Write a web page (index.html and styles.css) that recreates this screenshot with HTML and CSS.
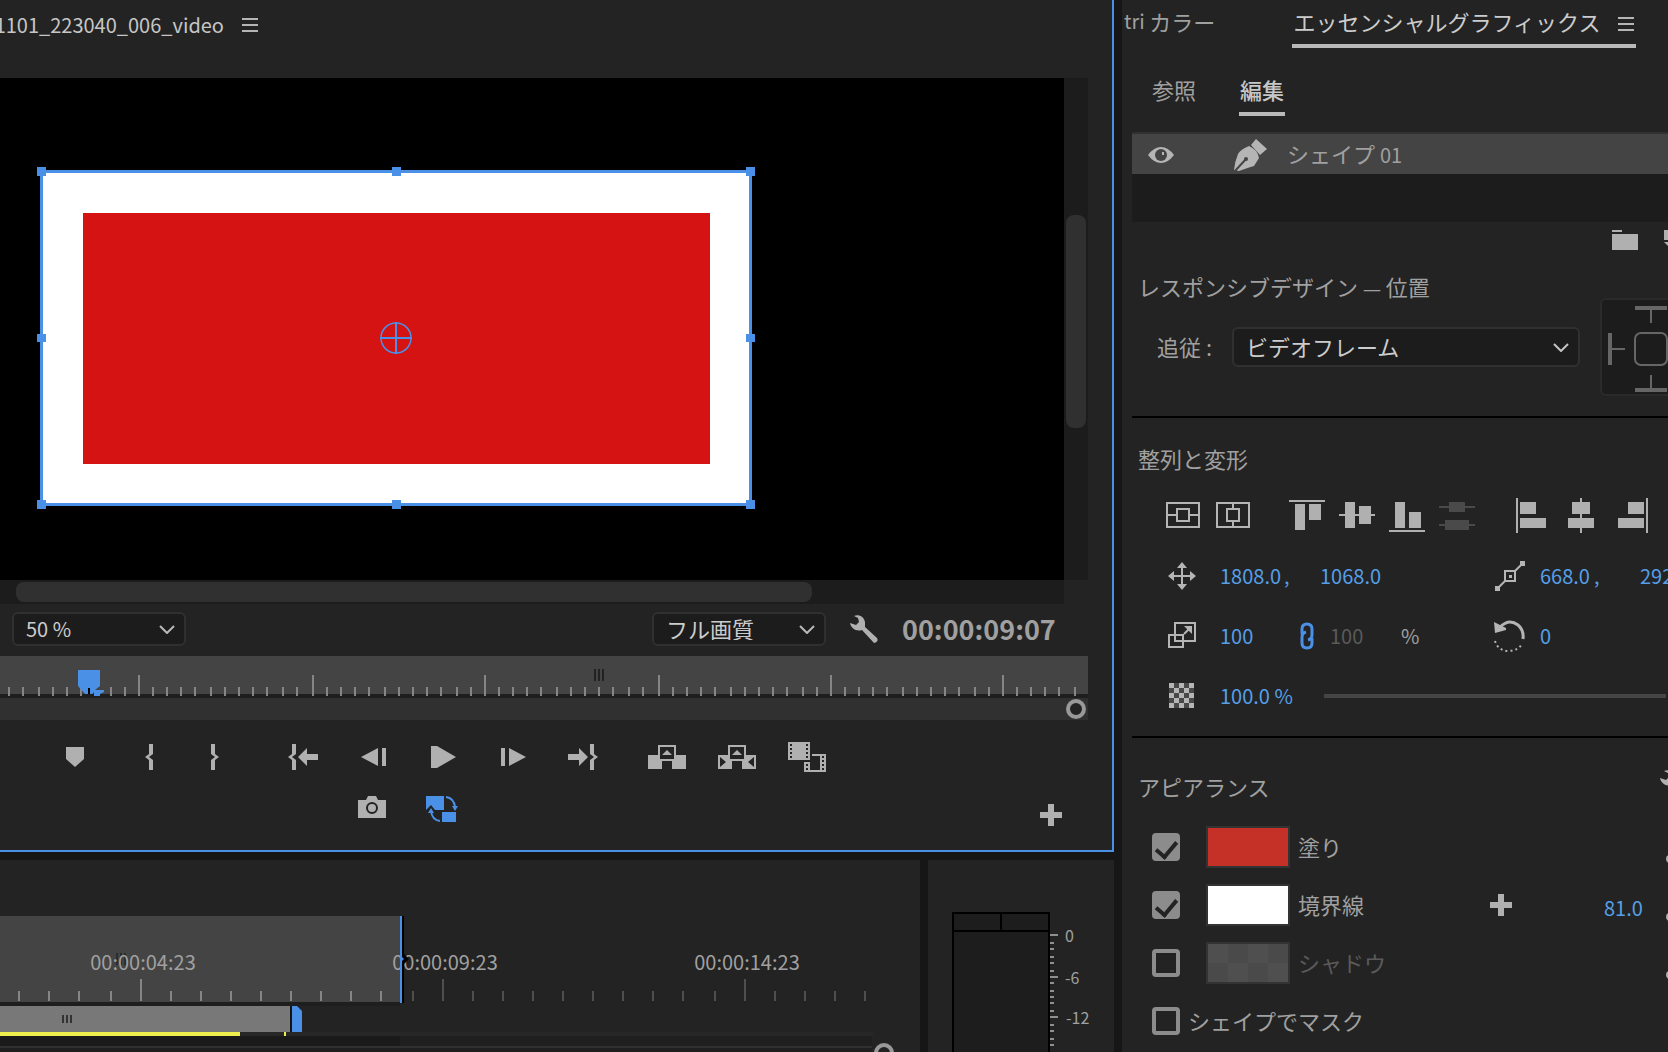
FILE: index.html
```html
<!DOCTYPE html>
<html lang="ja">
<head>
<meta charset="utf-8">
<title>エッセンシャルグラフィックス</title>
<link rel="stylesheet" href="styles.css">
</head>
<body>
<div class="app">
  <div class="left">
    <section class="monitor">
      <header class="monitor-head">
        <h1 class="clip-name"><span>1101_223040_006_video</span></h1>
        <button class="icon-btn" aria-label="パネルメニュー"><svg width="16" height="14"><path d="M0 1h16M0 7h16M0 13h16" stroke="#b5b5b5" stroke-width="2"/></svg></button>
      </header>

      <div class="stage">
        <div class="canvas">
          <svg width="1064" height="502" viewBox="0 78 1064 502">
            <rect x="42" y="172" width="708" height="332" fill="#fff"/>
            <rect x="83" y="213" width="627" height="251" fill="#d51313"/>
            <rect x="41.500" y="171.500" width="709" height="333" fill="none" stroke="#4a90e6" stroke-width="3"/>
            <path fill="#4a90e6" d="M37 167h9v9h-9zM392 167h9v9h-9zM746 167h9v9h-9zM37 334h9v8h-9zM746 334h9v8h-9zM37 500h9v9h-9zM392 500h9v9h-9zM746 500h9v9h-9z"/>
            <g fill="none" stroke="#4a90e6"><circle cx="396" cy="338" r="15" stroke-width="1.500"/><path d="M396 322v32M380 338h32" stroke-width="2"/></g>
          </svg>
        </div>
        <div class="track-v"><div class="thumb-v"></div></div>
        <div class="track-h"><div class="thumb-h"></div></div>
      </div>

      <div class="monitor-bar">
        <div class="select zoom">
          <select aria-label="ズームレベル"><option>50 %</option></select>
          <svg width="16" height="9"><path d="M1 1l7 7 7-7" fill="none" stroke="#b9b9b9" stroke-width="2"/></svg>
        </div>
        <div class="select quality">
          <select aria-label="再生時の解像度"><option>フル画質</option></select>
          <svg width="16" height="9"><path d="M1 1l7 7 7-7" fill="none" stroke="#b9b9b9" stroke-width="2"/></svg>
        </div>
        <button class="icon-btn wrench" aria-label="設定"><svg width="28" height="28" viewBox="0 0 28 28"><path fill="#b0b0b0" d="M4 1C9-1 14 2 15 7v5L27 23q2 4-3 5L12 15C6 17 1 13 0 8L6 10l3-3-1-4z"/></svg></button>
        <output class="timecode">00:00:09:07</output>
      </div>

      <div class="mini-ruler">
        <svg width="1088" height="64" viewBox="0 656 1088 64">
          <path fill="#444" d="M0 656h1088v38H0z"/>
          <path fill="#1e1e1e" d="M0 694h1088v4H0z"/>
          <path fill="#303030" d="M0 698h1088v22H0z"/>
          <path stroke="#858585" stroke-width="2" d="M9 687v9M23 687v9M39 687v9M53 687v9M67 687v9M81 687v9M111 687v9M125 687v9M139 675v21M153 687v9M167 687v9M181 687v9M195 687v9M211 687v9M225 687v9M239 687v9M253 687v9M267 687v9M283 687v9M297 687v9M313 675v21M327 687v9M341 687v9M355 687v9M369 687v9M385 687v9M399 687v9M413 687v9M427 687v9M441 687v9M457 687v9M471 687v9M485 675v21M499 687v9M513 687v9M527 687v9M541 687v9M557 687v9M571 687v9M585 687v9M599 687v9M613 687v9M629 687v9M643 687v9M659 675v21M673 687v9M687 687v9M701 687v9M715 687v9M731 687v9M745 687v9M759 687v9M773 687v9M787 687v9M803 687v9M817 687v9M831 675v21M845 687v9M859 687v9M873 687v9M887 687v9M903 687v9M917 687v9M931 687v9M945 687v9M959 687v9M975 687v9M989 687v9M1003 675v21M1017 687v9M1031 687v9M1045 687v9M1059 687v9M1075 687v9"/>
          <path stroke="#222" stroke-width="2" d="M595 669v12M599 669v12M603 669v12"/>
          <path fill="#4a90e6" d="M78 670h22v16l-5 4h9v2l-4 2v2h-6v-4l-2 2h-7l-7-8z"/>
          <path stroke="#000" stroke-width="2" d="M89 688v6"/>
          <circle cx="1076" cy="709" r="8" fill="#232323" stroke="#999" stroke-width="4"/>
        </svg>
      </div>

      <div class="transport">
        <div class="group small">
          <button aria-label="マーカーを追加"><svg width="18" height="20"><path fill="#b0b0b0" d="M0 0h18v12l-9 8-9-8z"/></svg></button>
        </div>
        <div class="group small">
          <button aria-label="インをマーク"><svg width="8" height="26"><path fill="#b0b0b0" d="M4 0h4v10l-4 3 4 3v10H4V16L0 13l4-3z"/></svg></button>
          <button aria-label="アウトをマーク"><svg width="8" height="26"><path fill="#b0b0b0" d="M4 0H0v10l4 3-4 3v10h4V16l4-3-4-3z"/></svg></button>
        </div>
        <div class="group">
          <button aria-label="インへ移動"><svg width="30" height="26"><path fill="#b0b0b0" d="M4 0h4v10l-4 3 4 3v10H4V16L0 13l4-3zM10 13l9-9v6h11v6H19v6z"/></svg></button>
          <button aria-label="1フレーム前へ戻る"><svg width="25" height="18"><path fill="#b0b0b0" d="M17 0v18L0 9zM21 0h4v18h-4z"/></svg></button>
          <button aria-label="再生"><svg width="25" height="22"><path fill="#b0b0b0" d="M0 0h6l19 11L6 22H0z"/></svg></button>
          <button aria-label="1フレーム先へ進む"><svg width="25" height="18"><path fill="#b0b0b0" d="M8 0v18l17-9zM0 0h4v18H0z"/></svg></button>
          <button aria-label="アウトへ移動"><svg width="30" height="26"><path fill="#b0b0b0" d="M26 0h-4v10l4 3-4 3v10h4V16l4-3-4-3zM20 13l-9-9v6H0v6h11v6z"/></svg></button>
        </div>
        <div class="group">
          <button aria-label="リフト"><svg width="38" height="26" viewBox="0 -1 38 26"><path fill="#b0b0b0" d="M0 10h10v6h4v8H0zM38 10H28v6h-4v8h14z"/><path fill="none" stroke="#b0b0b0" stroke-width="2" d="M11 1h16v14H11z"/><path fill="#b0b0b0" d="M19 5l5 5H14z"/></svg></button>
          <button aria-label="抽出"><svg width="38" height="26" viewBox="0 -1 38 26"><path fill="#b0b0b0" d="M0 10h10v6h4v8H0zM38 10H28v6h-4v8h14z"/><path fill="none" stroke="#b0b0b0" stroke-width="2" d="M11 1h16v14H11z"/><path fill="#b0b0b0" d="M19 5l5 5H14z"/><path fill="#232323" d="M2 12l6 5-6 5zM36 12l-6 5 6 5z"/></svg></button>
          <button aria-label="比較表示"><svg width="38" height="30"><path fill="#b0b0b0" d="M0 0h22v18H0zM24 12h14v18H16V20h6v8h10V14h-8z"/><path stroke="#232323" stroke-width="2" stroke-dasharray="2 2" d="M3 2v15M19 2v15M19 22v7M35 14v15"/></svg></button>
        </div>
      </div>
      <div class="transport-2">
        <button aria-label="フレームを書き出し"><svg width="28" height="22"><path fill="#b0b0b0" d="M0 4h8l2-4h8l2 4h8v18H0z"/><circle cx="14" cy="12" r="5" fill="#b0b0b0" stroke="#232323" stroke-width="2"/></svg></button>
        <button aria-label="プロキシの切り替え"><svg width="32" height="26"><path fill="#4a90e6" d="M0 0h18v14H9L5 9 0 14zM16 16h14v10H16zM26 10h6l-3 5zM2 17l3-5 3 5z"/><path fill="none" stroke="#4a90e6" stroke-width="2" d="M20 1q8 1 9 10M5 15q1 9 9 10"/></svg></button>
        <button class="add" aria-label="ボタンエディター"><svg width="22" height="22"><path fill="#b0b0b0" d="M8 0h6v8h8v6h-8v8H8v-8H0V8h8z"/></svg></button>
      </div>
    </section>

    <div class="bottom">
      <section class="timeline" aria-label="タイムライン">
        <svg width="920" height="192" viewBox="0 860 920 192">
          <path fill="#444" d="M0 916h400v86H0z"/>
          <path fill="#1e1e1e" d="M0 1002h400v4H0z"/>
          <path stroke="#2c2c2c" stroke-width="2" d="M117 953v12M121 953v12M125 953v12"/>
          <path stroke="#858585" stroke-width="2" d="M19 991v10M49 991v10M79 991v10M111 991v10M141 979v22M171 991v10M201 991v10M231 991v10M261 991v10M291 991v10M321 991v10M351 991v10M381 991v10"/>
          <path stroke="#4e4e4e" stroke-width="2" d="M413 991v10M443 979v22M473 991v10M503 991v10M533 991v10M563 991v10M593 991v10M623 991v10M653 991v10M683 991v10M715 991v10M745 979v22M775 991v10M805 991v10M835 991v10M865 991v10"/>
          <g class="ruler-text">
            <text x="143" y="970">00:00:04:23</text>
            <text x="445" y="970">00:00:09:23</text>
            <text x="747" y="970">00:00:14:23</text>
          </g>
          <path fill="#000" d="M402 916h2v38l5 5-5 5v39h-2z"/>
          <path fill="#4a90e6" d="M400 916h2v41l2 2-2 2v42h-2z"/>
          <path fill="#272727" d="M0 1032h873v4H0z"/>
          <path fill="#1f1f1f" d="M0 1036h872v16H0z"/>
          <path fill="#1a1a1a" d="M0 1036h400v10H0z"/>
          <path fill="#303030" d="M0 1046h872v2H0z"/>
          <path fill="#787878" d="M0 1006h290v26H0z"/>
          <path fill="#141414" d="M290 1006h2v26h-2z"/>
          <path stroke="#333" stroke-width="2" d="M63 1015v8M67 1015v8M71 1015v8"/>
          <path fill="#4a90e6" d="M292 1006h5l5 5v21h-10z"/>
          <path fill="#f0ee4d" d="M0 1032h240v4H0zM284 1032h2v4h-2z"/>
          <circle cx="884" cy="1053" r="8" fill="#232323" stroke="#999" stroke-width="4"/>
        </svg>
      </section>
      <section class="meters" aria-label="オーディオメーター">
        <svg width="186" height="192" viewBox="928 860 186 192">
          <path fill="#1d1d1d" stroke="#000" stroke-width="2" d="M953 913h96v160h-96zM953 931h96M1001 913v18"/>
          <path stroke="#909090" stroke-width="2" d="M1050 935h8M1050 943h4M1050 949h4M1050 957h4M1050 963h4M1050 971h4M1050 977h8M1050 983h4M1050 991h4M1050 997h4M1050 1003h4M1050 1011h4M1050 1017h8M1050 1025h4M1050 1031h4M1050 1039h4M1050 1045h4"/>
          <g class="meter-text">
            <text x="1065" y="942">0</text>
            <text x="1065" y="984">-6</text>
            <text x="1066" y="1024">-12</text>
          </g>
        </svg>
      </section>
    </div>
  </div>

  <aside class="graphics">
    <nav class="tabs">
      <button class="tab"><span class="latin">tri </span>カラー</button>
      <button class="tab active">エッセンシャルグラフィックス<svg width="16" height="14"><path d="M0 1h16M0 7h16M0 13h16" stroke="#b5b5b5" stroke-width="2"/></svg></button>
    </nav>
    <nav class="subtabs">
      <button class="subtab">参照</button>
      <button class="subtab active">編集</button>
    </nav>

    <div class="layers">
      <div class="layer">
        <button class="icon-btn" aria-label="表示の切り替え"><svg width="26" height="16"><path fill="#b5b5b5" d="M0 8Q6 0 13 0t13 8q-6 8-13 8T0 8z"/><circle cx="13" cy="8" r="6" fill="#444"/><path fill="#b5b5b5" d="M14 5h2v3h-2z"/></svg></button>
        <svg class="pen" width="33" height="32"><path fill="#b5b5b5" d="M22 0l11 10-7 6-9-10zM15 7q9 4 10 12l-5 8q-7 2-15 5l-5-1q1-9 4-16 3-5 11-8z"/><path fill="none" stroke="#444" stroke-width="2" d="M1 32l11-12"/><circle cx="12" cy="20" r="2" fill="#444"/></svg>
        <span>シェイプ <span class="latin">01</span></span>
      </div>
    </div>
    <div class="layer-tools">
      <button class="icon-btn" aria-label="グループを作成"><svg width="26" height="20"><path fill="#b0b0b0" d="M0 0h10v2H0zM0 4h26v16H0z"/></svg></button>
      <button class="icon-btn" aria-label="新規レイヤー"><svg width="26" height="20"><path fill="#b0b0b0" d="M0 0h20v10H0zM0 12h8v8z"/></svg></button>
    </div>

    <h2 class="heading">レスポンシブデザイン <span class="dash">—</span> 位置</h2>
    <div class="follow">
      <label for="follow">追従 :</label>
      <div class="select wide">
        <select id="follow"><option>ビデオフレーム</option></select>
        <svg width="16" height="9"><path d="M1 1l7 7 7-7" fill="none" stroke="#c4c4c4" stroke-width="2"/></svg>
      </div>
      <svg class="pin" width="98" height="98" viewBox="0 0 98 98"><rect x="1" y="1" width="96" height="96" rx="5" fill="#1c1c1c" stroke="#2a2a2a" stroke-width="2"/><path fill="#666" d="M35 8h32v4H35zM50 12h2v13h-2zM35 90h32v4H35zM50 77h2v13h-2zM8 35h4v32H8zM12 50h13v2H12z"/><rect x="35" y="35" width="32" height="32" rx="6" fill="none" stroke="#666" stroke-width="2"/></svg>
    </div>

    <div class="rule"></div>
    <h2 class="heading align">整列と変形</h2>
    <div class="align-row">
      <div class="align-group">
        <button aria-label="垂直方向に中央揃え"><svg width="36" height="36"><path fill="none" stroke="#b5b5b5" stroke-width="2" d="M2 6h32v24H2zM12 12h12v12H12zM2 18h10M24 18h10"/></svg></button>
        <button aria-label="水平方向に中央揃え"><svg width="36" height="36"><path fill="none" stroke="#b5b5b5" stroke-width="2" d="M2 6h32v24H2zM12 12h12v12H12zM18 6v6M18 24v6"/></svg></button>
      </div>
      <div class="align-group">
        <button aria-label="上揃え"><svg width="36" height="36"><path fill="#b0b0b0" d="M0 3h36v2H0zM6 7h10v26H6zM20 7h12v16H20z"/></svg></button>
        <button aria-label="垂直中央"><svg width="36" height="36"><path fill="#b0b0b0" d="M0 17h36v2H0zM6 5h10v26H6zM20 9h12v18H20z"/></svg></button>
        <button aria-label="下揃え"><svg width="36" height="36"><path fill="#b0b0b0" d="M0 33h36v2H0zM6 5h10v26H6zM20 15h12v16H20z"/></svg></button>
        <button aria-label="垂直方向に分布" disabled><svg width="36" height="36"><path fill="#4a4a4a" d="M0 9h36v2H0zM10 5h16v10H10zM0 27h36v2H0zM6 23h24v10H6z"/></svg></button>
      </div>
      <div class="align-group">
        <button aria-label="左揃え"><svg width="36" height="36"><path fill="#b0b0b0" d="M3 1h2v36H3zM7 5h16v12H7zM7 21h26v10H7z"/></svg></button>
        <button aria-label="水平中央"><svg width="36" height="36"><path fill="#b0b0b0" d="M17 1h2v36h-2zM9 5h18v12H9zM5 21h26v10H5z"/></svg></button>
        <button aria-label="右揃え"><svg width="36" height="36"><path fill="#b0b0b0" d="M33 1h2v36h-2zM15 5h16v12H15zM5 21h26v10H5z"/></svg></button>
      </div>
    </div>

    <div class="params">
      <svg width="34" height="32"><path stroke="#b5b5b5" stroke-width="2" d="M16 6v20M6 16h20"/><path fill="#b5b5b5" d="M16 2l5 6H11zM16 30l-5-6h10zM2 16l6-5v10zM30 16l-6 5V11z"/></svg>
      <span><input class="num w-xl" aria-label="位置 X" value="1808.0"><i>,</i></span>
      <span><input class="num w-xl" aria-label="位置 Y" value="1068.0"></span>
      <svg width="34" height="32"><path stroke="#b5b5b5" stroke-width="2" d="M5 29L31 3"/><path fill="#232323" stroke="#b5b5b5" stroke-width="2" d="M13 11h10v10H13z"/><path fill="#b5b5b5" d="M28 1h5v5h-5zM3 26h5v5H3zM17 15h3v3h-3z"/></svg>
      <span><input class="num w-l" aria-label="アンカー X" value="668.0"><i>,</i></span>
      <span><input class="num w-l" aria-label="アンカー Y" value="292.0"></span>

      <svg width="34" height="32"><path fill="none" stroke="#b5b5b5" stroke-width="2" d="M9 3h20v18H9zM3 15h14v12H3z"/><path fill="none" stroke="#b5b5b5" stroke-width="2" d="M18 14l6-6"/><path fill="#b5b5b5" d="M18 6h8v8z"/></svg>
      <span class="linked"><input class="num w-m" aria-label="スケール" value="100"><button class="icon-btn" aria-label="縦横比を固定"><svg width="14" height="28"><path fill="none" stroke="#4a90e6" stroke-width="3" d="M2 12V7q0-5 5-5t5 5v6q0 4-4 5M12 16v5q0 5-5 5t-5-5v-6q0-4 4-5"/></svg></button></span>
      <span class="dim"><input class="num w-m" aria-label="スケール 高さ" value="100" disabled><i class="unit">%</i></span>
      <svg width="34" height="32"><path fill="none" stroke="#b5b5b5" stroke-width="3" d="M8 7Q17-2 26 5q6 5 5 14"/><path fill="#b5b5b5" d="M2 2l12 6v2L3 13z"/><path fill="none" stroke="#b5b5b5" stroke-width="2" stroke-dasharray="2 3" d="M3 21q3 10 14 10 11-1 13-8"/></svg>
      <span><input class="num w-m" aria-label="回転" value="0"></span>
      <span></span>

      <svg width="34" height="32"><path fill="#484848" d="M3 3h25v25H3z"/><path fill="#b5b5b5" d="M3 3h5v5H3zM13 3h5v5h-5zM23 3h5v5h-5zM8 8h5v5H8zM18 8h5v5h-5zM3 13h5v5H3zM13 13h5v5h-5zM23 13h5v5h-5zM8 18h5v5H8zM18 18h5v5h-5zM3 23h5v5H3zM13 23h5v5h-5zM23 23h5v5h-5z"/></svg>
      <span><input class="num w-xxl" aria-label="不透明度" value="100.0 %"></span>
      <input class="slider" type="range" value="100" aria-label="不透明度スライダー">
    </div>

    <div class="rule"></div>
    <div class="appearance-head">
      <h2 class="heading">アピアランス</h2>
      <button class="icon-btn" aria-label="グラフィックプロパティ"><svg width="28" height="28" viewBox="0 0 28 28"><path fill="#b0b0b0" d="M4 1C9-1 14 2 15 7v5L27 23q2 4-3 5L12 15C6 17 1 13 0 8L6 10l3-3-1-4z"/></svg></button>
    </div>
    <div class="appearance">
      <div class="prop">
        <input type="checkbox" id="fill" checked><button class="swatch fill" aria-label="塗りの色"></button><label for="fill">塗り</label>
        <button class="picker" aria-label="スポイト"></button>
      </div>
      <div class="prop">
        <input type="checkbox" id="stroke" checked><button class="swatch stroke" aria-label="境界線の色"></button><label for="stroke">境界線</label>
        <button class="icon-btn plus" aria-label="境界線を追加"><svg width="22" height="22"><path fill="#b0b0b0" d="M8 0h6v8h8v6h-8v8H8v-8H0V8h8z"/></svg></button>
        <input class="num w-s" aria-label="境界線の幅" value="81.0">
        <button class="picker" aria-label="スポイト"></button>
      </div>
      <div class="prop off">
        <input type="checkbox" id="shadow"><button class="swatch shadow" aria-label="シャドウの色"></button><label for="shadow">シャドウ</label>
        <button class="picker" aria-label="スポイト"></button>
      </div>
      <div class="prop mask">
        <input type="checkbox" id="mask"><label for="mask">シェイプでマスク</label>
      </div>
    </div>
  </aside>
</div>
</body>
</html>
```
FILE: styles.css
```css
* { box-sizing: border-box; }

body {
  margin: 0;
  background: #161616;
  color: #a0a0a0;
  font: 22px/24px "Noto Sans CJK JP", sans-serif;
}

button, select, input {
  margin: 0;
  padding: 0;
  border: 0;
  background: none;
  color: inherit;
  font: inherit;
}

button { display: flex; align-items: center; justify-content: center; }
svg { display: block; flex: none; }
h1, h2 { margin: 0; font: inherit; }
i { font-style: normal; }
.latin { font-size: 20px; line-height: 1; }

.app {
  display: grid;
  grid-template-columns: minmax(0, 1fr) 546px;
  gap: 8px;
  height: 100vh;
  overflow: hidden;
}

.left {
  display: flex;
  flex-direction: column;
  gap: 8px;
  min-width: 0;
}

/* Program monitor */
.monitor {
  border: solid #4a90e6;
  border-width: 0 2px 2px 0;
  background: #232323;
}

.monitor-head {
  display: flex;
  align-items: center;
  gap: 18px;
  height: 78px;
  padding-bottom: 28px;
}

.clip-name {
  display: flex;
  justify-content: flex-end;
  width: 224px;
  overflow: hidden;
  color: #c6c6c6;
  font-size: 20px;
}

.stage {
  display: grid;
  grid-template-columns: minmax(0, 1fr) 24px;
  grid-template-rows: 502px 24px;
  margin-right: 24px;
}

.canvas { overflow: hidden; background: #000; }
.track-v { padding: 137px 2px 0; background: #1c1c1c; }
.thumb-v { height: 213px; border-radius: 8px; background: #303030; }
.track-h { padding: 2px 0 0 16px; background: #1c1c1c; }
.thumb-h { width: 76%; height: 20px; border-radius: 8px; background: #303030; }

.monitor-bar {
  display: flex;
  align-items: center;
  height: 52px;
  padding: 0 57px 2px 12px;
}

.select {
  display: grid;
  grid-template-columns: 1fr 25px;
  align-items: center;
  width: 174px;
  height: 34px;
  border: 2px solid #303030;
  border-radius: 6px;
  background: #1c1c1c;
  color: #cccccc;
}

.select select {
  grid-area: 1 / 1 / 2 / 3;
  width: 100%;
  height: 100%;
  padding: 0 0 2px 12px;
  appearance: none;
}

.select svg { grid-area: 1 / 2; pointer-events: none; }
.zoom { font-size: 20px; }
.zoom select { padding-bottom: 0; }
.quality { margin-left: auto; }
.wrench { margin: 0 24px; }
.timecode { width: 153px; font-size: 27px; font-weight: 700; white-space: nowrap; }

.mini-ruler { margin-right: 24px; overflow: hidden; }

.transport { display: flex; gap: 14px; height: 74px; padding-left: 42px; }
.group { display: flex; }
.group button { width: 70px; }
.group.small button { width: 66px; }
.group.small { margin-right: -6px; }
.group.small + .group.small { margin-right: 6px; }

.transport-2 {
  display: flex;
  align-items: flex-start;
  height: 56px;
  padding: 2px 50px 0 337px;
}

.transport-2 button { width: 70px; }
.transport-2 .add { width: 22px; margin: 8px 0 0 auto; }

/* Timeline and audio meters */
.bottom {
  display: grid;
  grid-template-columns: minmax(0, 1fr) 186px;
  gap: 8px;
  flex: 1;
  min-height: 0;
}

.timeline, .meters { overflow: hidden; background: #232323; }
.ruler-text { fill: #a0a0a0; font-size: 20px; text-anchor: middle; }
.meter-text { fill: #a0a0a0; font-size: 16px; }

/* Essential Graphics */
.graphics {
  min-width: 0;
  overflow: hidden;
  background: #232323;
}

.tabs { display: flex; padding: 9px 32px 0 2px; }
.tab { padding-bottom: 11px; border-bottom: 4px solid transparent; white-space: pre; }
.tab svg { margin-top: 6px; }
.tab.active {
  gap: 18px;
  width: 344px;
  margin-left: auto;
  border-color: #b9b9b9;
  color: #cccccc;
}

.subtabs { display: flex; gap: 42px; margin: 29px 0 16px 29px; }
.subtab { width: 46px; padding-bottom: 11px; border-bottom: 4px solid transparent; }
.subtab.active { border-color: #b9b9b9; color: #c6c6c6; font-weight: 500; }

.layers {
  height: 90px;
  margin-left: 10px;
  border-top: 2px solid #303030;
  background: #1c1c1c;
}

.layer { display: flex; align-items: center; height: 40px; padding: 0 0 2px 16px; background: #444; }
.layer svg { margin-top: 4px; }
.layer .pen { margin: 4px 20px 0 60px; }
.layer-tools { display: flex; gap: 26px; padding: 8px 0 0 490px; }

.heading { margin: 24px 0 0 16px; }
.dash { font-family: "Noto Sans", sans-serif; font-size: 18px; line-height: 1; }
.follow { display: flex; align-items: center; height: 98px; padding-left: 35px; }
.follow label { flex: none; width: 75px; padding-bottom: 2px; }
.wide { flex: none; width: 348px; height: 40px; }
.pin { margin-left: 20px; }

.rule { height: 2px; margin: 20px 0 0 10px; background: #000; }
.heading.align { margin-top: 28px; }

.align-row { display: flex; gap: 38px; margin: 27px 0 23px 43px; }
.align-group { display: flex; gap: 14px; }

.params {
  display: grid;
  grid-template-columns: 54px 100px 172px 48px 100px 60px;
  grid-auto-rows: 40px;
  row-gap: 20px;
  align-items: center;
  margin-left: 44px;
  font-size: 20px;
}

.params span { display: flex; align-items: center; }
.num { height: 24px; color: #559fe8; font-size: 20px; }
.params i { color: #559fe8; }
.params i.unit { margin-left: 33px; color: #a0a0a0; }
.w-s { width: 40px; }
.w-m { width: 38px; }
.w-l { width: 54px; }
.w-xl { width: 64px; }
.w-xxl { width: 78px; }
.linked { justify-content: space-between; padding-right: 6px; }
.dim { padding-left: 10px; }
.dim .num { color: #5a5a5a; }

.slider {
  grid-column: 3 / 7;
  width: 342px;
  height: 4px;
  margin-left: 4px;
  background: #454545;
  appearance: none;
}
.slider::-webkit-slider-thumb { width: 0; appearance: none; }

.appearance-head {
  display: flex;
  justify-content: space-between;
  margin-right: -20px;
  padding: 32px 0 28px;
}
.appearance-head .heading { margin-top: 4px; }

.appearance { display: grid; gap: 16px; }
.prop { display: flex; align-items: center; height: 42px; padding-left: 30px; }
.prop label { padding-bottom: 2px; }

.prop input[type="checkbox"] {
  flex: none;
  width: 28px;
  height: 28px;
  border: 4px solid #8c8c8c;
  border-radius: 4px;
  appearance: none;
}

.prop input[type="checkbox"]:checked { display: grid; place-items: center; background: #8c8c8c; }
.prop input[type="checkbox"]:checked::before {
  content: "";
  width: 9px;
  height: 17px;
  margin-bottom: 4px;
  border: solid #232323;
  border-width: 0 4px 4px 0;
  transform: rotate(40deg);
}

.swatch { flex: none; width: 84px; height: 42px; margin: 0 8px 0 26px; border: 2px solid #333; }
.fill { background: #c53027; }
.stroke { background: #fff; }
.shadow { background: repeating-conic-gradient(#4a4a4a 0 25%, #4f4f4f 0 50%) 0 0 / 40px 38px; }
.off label { color: #5a5a5a; }
.mask label { margin-left: 8px; }
.plus { margin-left: auto; }
.num.w-s { margin: 6px 0 0 92px; }

.picker {
  flex: none;
  width: 12px;
  height: 8px;
  margin: 24px -10px 0 auto;
  border-radius: 4px;
  background: #b0b0b0;
}
.w-s + .picker { margin-left: 22px; }
```
